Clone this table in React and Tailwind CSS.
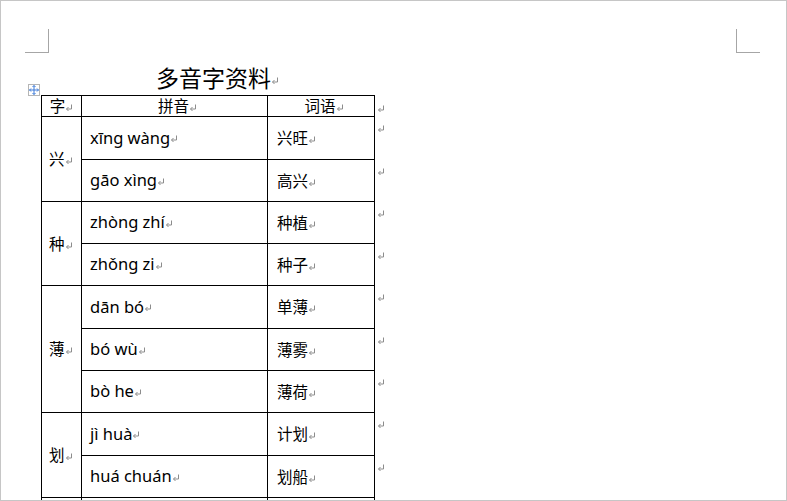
import React from "react";

const Mark = ({ className = "" }) => (
  <svg width="8" height="8" viewBox="0 0 8 8" className={"inline-block " + className}>
    <path d="M6.5 0.5 V5 H1.5 M3.5 3 L1.5 5 L3.5 7" fill="none" stroke="#8c8c8c" strokeWidth="1" />
  </svg>
);

const MoveHandle = () => (
  <div className="absolute left-[-13px] top-[-11px] w-[12px] h-[12px] border border-[#b5b5b5] bg-white flex items-center justify-center">
    <svg width="10" height="10" viewBox="0 0 10 10">
      <path d="M5 0.5 V9.5 M0.5 5 H9.5 M3.5 2 L5 0.5 L6.5 2 M3.5 8 L5 9.5 L6.5 8 M2 3.5 L0.5 5 L2 6.5 M8 3.5 L9.5 5 L8 6.5" fill="none" stroke="#3b78d8" strokeWidth="1" />
    </svg>
  </div>
);

const groups = [
  { ch: "兴", rows: [["xīng wàng", "兴旺", 43], ["gāo xìng", "高兴", 42]] },
  { ch: "种", rows: [["zhòng zhí", "种植", 42], ["zhǒng zi", "种子", 42]] },
  { ch: "薄", rows: [["dān bó", "单薄", 43], ["bó wù", "薄雾", 42], ["bò he", "薄荷", 42]] },
  { ch: "划", rows: [["jì huà", "计划", 43], ["huá chuán", "划船", 42]] },
];

const cjk = { fontFamily: '"Noto Sans CJK SC", sans-serif' };
const latin = { fontFamily: '"Noto Sans", "Noto Sans CJK SC", sans-serif' };

export default function App() {
  return (
    <div className="w-[787px] h-[501px] border border-[#c6c6c6] bg-white overflow-hidden text-black" style={cjk}>
      <div className="flex justify-between pl-[24px] pr-[26px] pt-[28px]">
        <div className="w-[24px] h-[24px] border-r border-b border-[#a6a6a6]" />
        <div className="w-[24px] h-[24px] border-l border-b border-[#a6a6a6]" />
      </div>

      <div className="ml-[40px] w-[335px] pl-[18px] mt-[6px] h-[36px] flex items-center justify-center">
        <span className="text-[23px] leading-none">多音字资料</span>
        <Mark className="mt-[8px]" />
      </div>

      <div className="relative ml-[40px] w-[360px]">
        <MoveHandle />
        <table className="border-collapse table-fixed w-[334px] text-[15.5px]">
          <colgroup>
            <col className="w-[40px]" />
            <col className="w-[186px]" />
            <col className="w-[107px]" />
          </colgroup>
          <tbody>
            <tr className="h-[21px]">
              <td className="border border-black p-0 text-center leading-none">字<Mark /></td>
              <td className="border border-black p-0 text-center leading-none pl-[6px]">拼音<Mark /></td>
              <td className="border border-black p-0 text-center leading-none pl-[6px]">词语<Mark /></td>
              <td className="relative p-0 w-0"><Mark className="absolute left-[2px] top-[9px]" /></td>
            </tr>
            {groups.map((g) =>
              g.rows.map(([py, word, h], i) => (
                <tr key={g.ch + i} style={{ height: h }}>
                  {i === 0 && (
                    <td rowSpan={g.rows.length} className="border border-black p-0 pl-[7px] leading-none">
                      {g.ch}<Mark />
                    </td>
                  )}
                  <td className="border border-black p-0 pl-[8px] text-[16.5px] leading-none" style={latin}>
                    {py}<Mark />
                  </td>
                  <td className="border border-black p-0 pl-[9px] leading-none">{word}<Mark /></td>
                  <td className="relative p-0 w-0"><Mark className="absolute left-[2px] top-[8px]" /></td>
                </tr>
              ))
            )}
            <tr className="h-[42px]">
              <td className="border border-black p-0" />
              <td className="border border-black p-0" />
              <td className="border border-black p-0" />
              <td className="p-0 w-0" />
            </tr>
          </tbody>
        </table>
      </div>
    </div>
  );
}
